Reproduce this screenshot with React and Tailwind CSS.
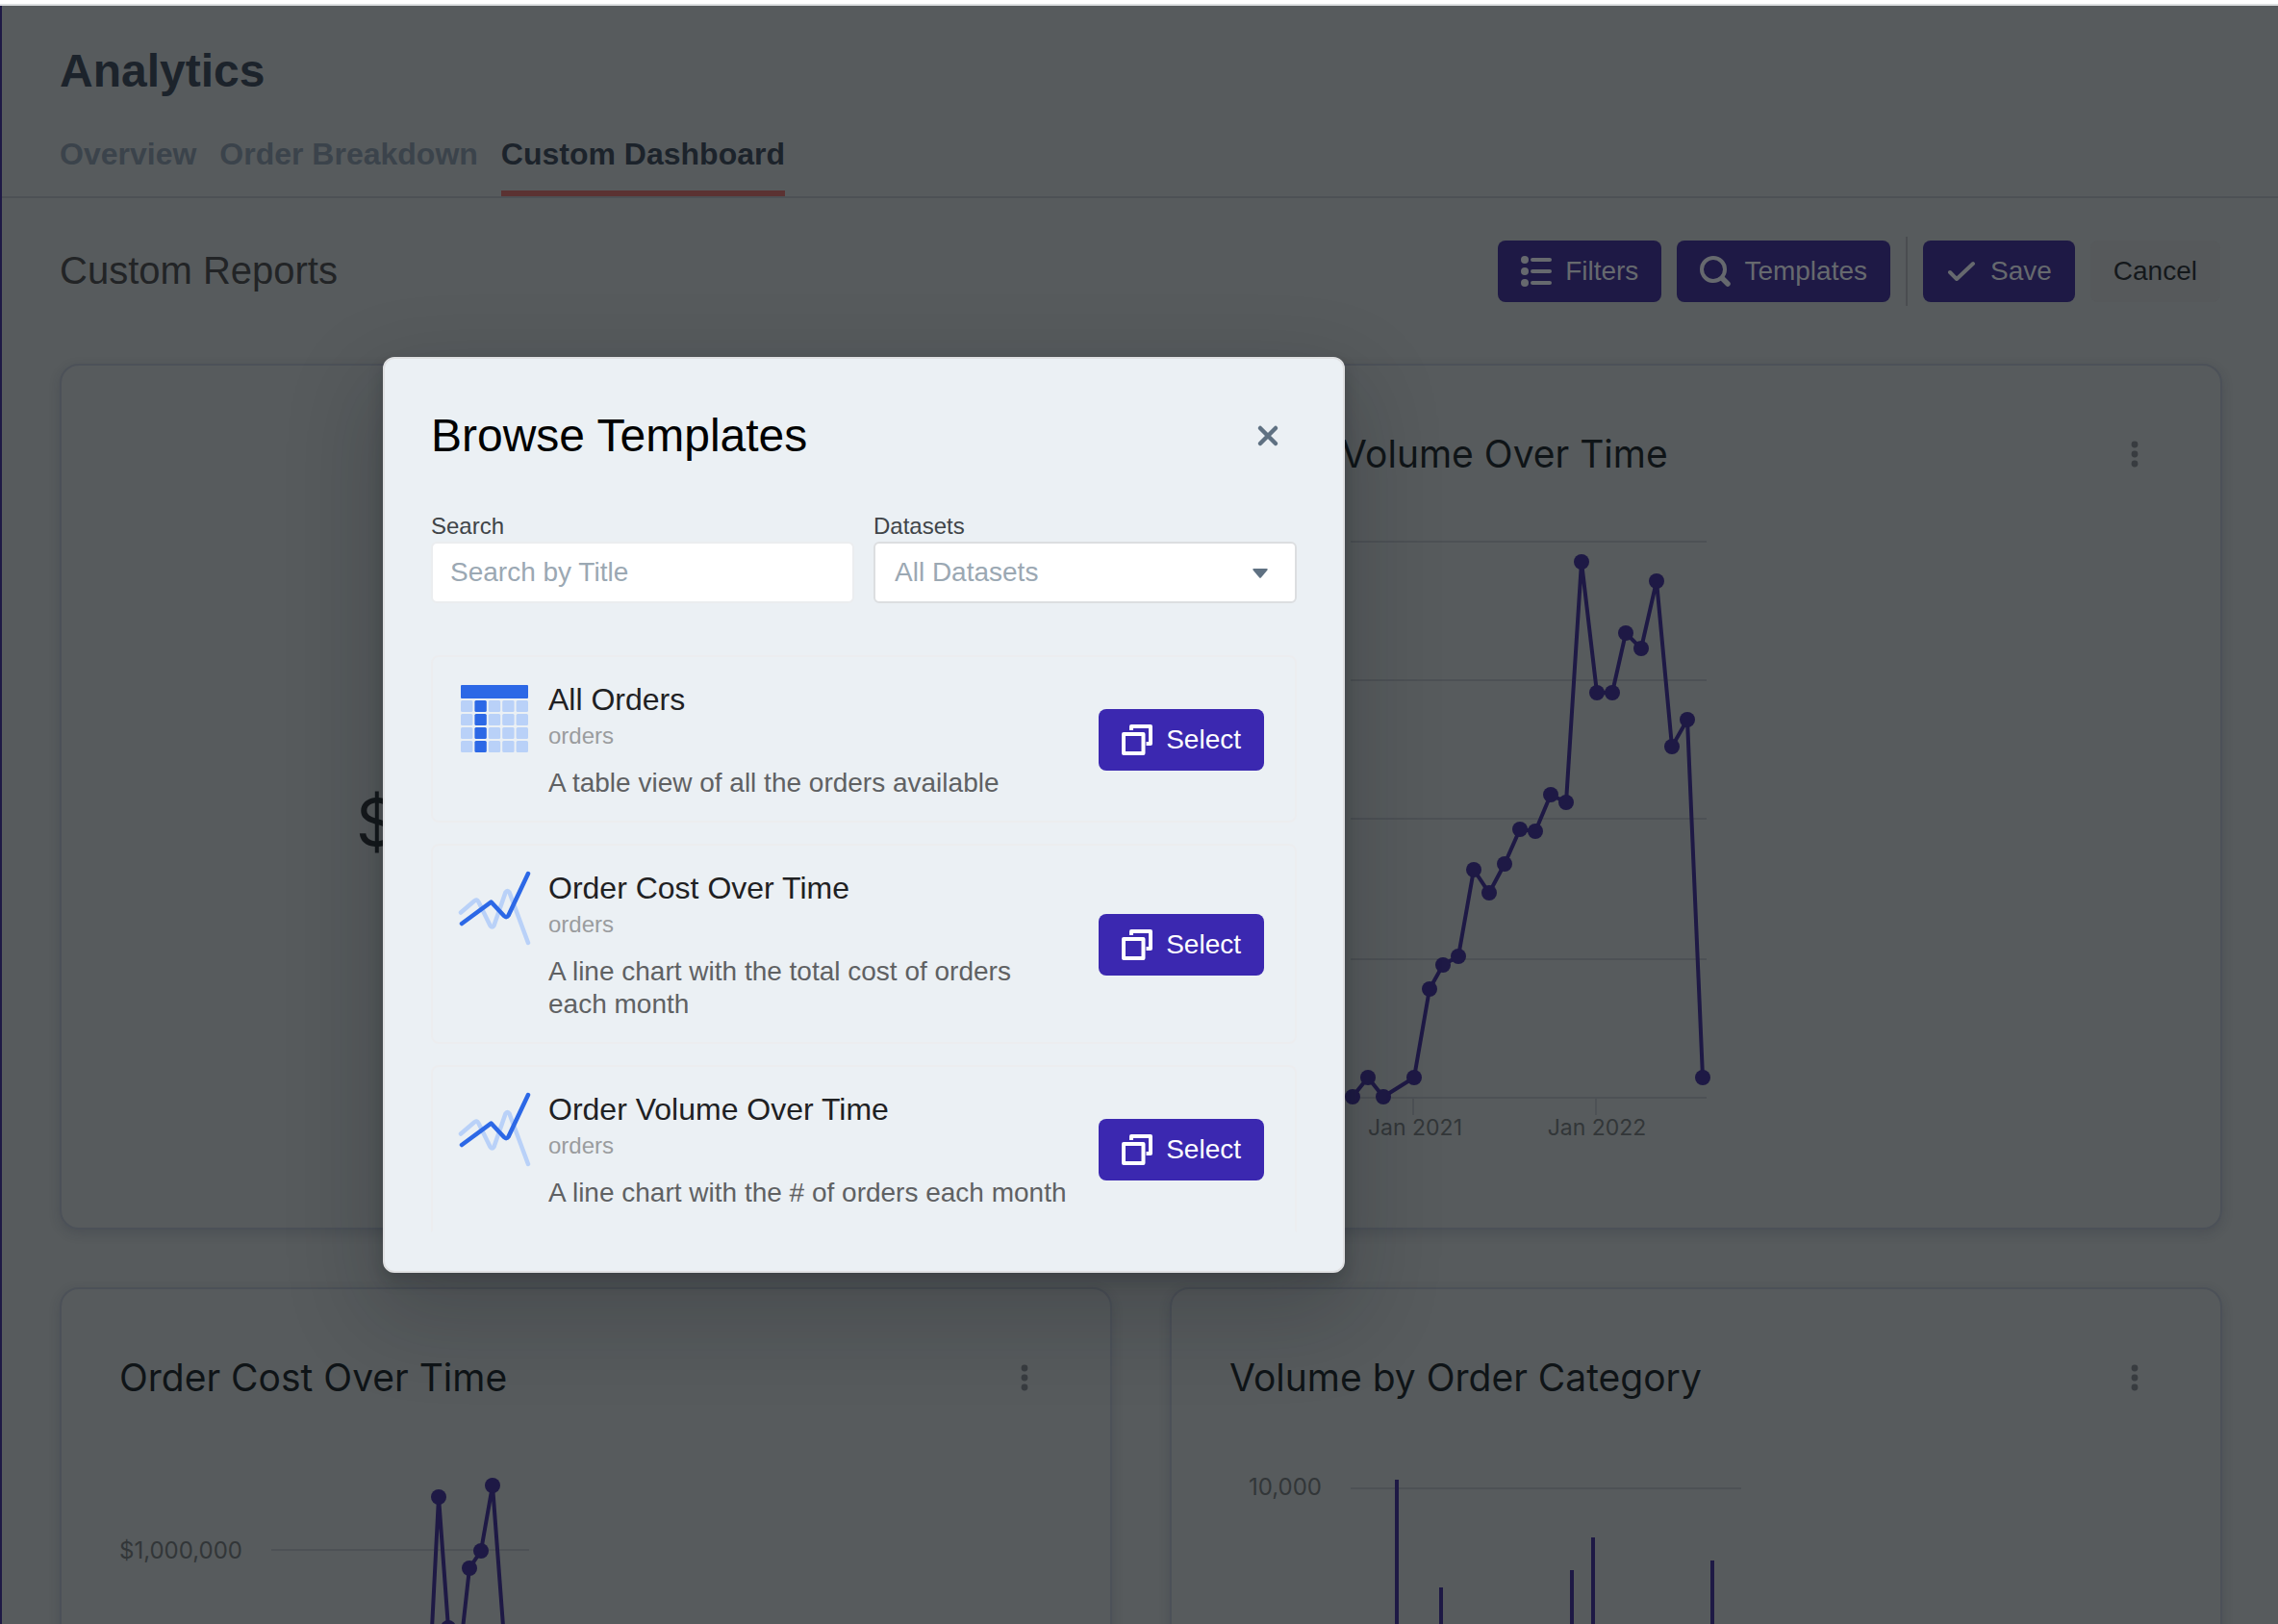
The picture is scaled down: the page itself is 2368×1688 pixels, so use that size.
import React, { useState } from 'react';
import clsx from 'clsx';

const TABS = ['Overview', 'Order Breakdown', 'Custom Dashboard'];

const TEMPLATES = [
  { id: 1, title: 'All Orders', dataset: 'orders', type: 'table', description: 'A table view of all the orders available' },
  { id: 2, title: 'Order Cost Over Time', dataset: 'orders', type: 'line', description: 'A line chart with the total cost of orders each month' },
  { id: 3, title: 'Order Volume Over Time', dataset: 'orders', type: 'line', description: 'A line chart with the # of orders each month' },
];

const VOLUME_POINTS = [
  [128, 600], [144, 580], [160, 600], [192, 580], [208, 488], [222, 463], [238, 454], [254, 364],
  [270, 388], [286, 358], [302, 322], [318, 324], [334, 286], [350, 294], [366, 44], [382, 180],
  [398, 180], [412, 118], [428, 134], [444, 64], [460, 236], [476, 208], [492, 580],
];

const COST_POINTS = [[318, 330], [332, 56], [342, 192], [354, 220], [364, 130], [376, 112], [388, 44], [402, 230]];

const CATEGORY_BARS = [[172, 38], [218, 150], [354, 132], [376, 98], [500, 122]];

function ListIcon() {
  return (
    <svg className="w-8 h-8" viewBox="0 0 32 32" fill="currentColor">
      {[4, 16, 28].map((y) => (
        <g key={y}>
          <circle cx="4" cy={y} r="4" />
          <rect x="10" y={y - 2} width="22" height="4" rx="2" />
        </g>
      ))}
    </svg>
  );
}

function SearchIcon() {
  return (
    <svg className="w-8 h-8" viewBox="0 0 32 32" fill="none" stroke="currentColor" strokeLinecap="round">
      <circle cx="14" cy="14" r="12" strokeWidth="4" />
      <path d="M23.5 23.5l5.5 5.5" strokeWidth="5.5" />
    </svg>
  );
}

function TickIcon() {
  return (
    <svg className="w-8 h-8" viewBox="0 0 32 32" fill="none" stroke="currentColor" strokeWidth="4" strokeLinecap="round" strokeLinejoin="round">
      <path d="M4 17l7 7L28 8" />
    </svg>
  );
}

function DuplicateIcon() {
  return (
    <svg className="w-8 h-8" viewBox="0 0 32 32" fill="none" stroke="currentColor" strokeWidth="4" strokeLinejoin="round">
      <rect x="2" y="10" width="20.5" height="20" />
      <path d="M10 6V2h20v18h-4.5" />
    </svg>
  );
}

function TableArt() {
  return (
    <svg className="w-20 h-20 shrink-0" viewBox="0 0 80 80">
      <rect x="5" y="5" width="70" height="14" rx="1" fill="#2c68e6" />
      {[21, 35, 49, 63].map((y) =>
        [0, 1, 2, 3, 4].map((c) => (
          <rect key={`${y}-${c}`} x={5 + c * 14.4} y={y} width="12.4" height="12" rx="1.5" fill={c === 1 ? '#2c68e6' : '#b9d1f8'} />
        ))
      )}
    </svg>
  );
}

function LineArt() {
  return (
    <svg className="w-20 h-20 shrink-0" viewBox="0 0 80 80" fill="none" strokeWidth="4.5" strokeLinecap="round" strokeLinejoin="round">
      <path d="M5 45.5L19 33.5Q21.500 31 23.500 34.500L35.500 59Q37.500 62 39.500 59L51.500 24.500Q53.500 21.500 55.500 24.500L75 77" stroke="#b9d1f8" />
      <path d="M6 57L36.500 34.500L50 49Q52.500 51.500 54.500 48.500L75 5" stroke="#2c68e6" />
    </svg>
  );
}

function HeaderButton({ icon, children }) {
  return (
    <button type="button" className="flex items-center gap-3.5 h-16 px-6 rounded-lg bg-[#1e1945] text-[#66696e] text-[28px]">
      {icon}
      {children}
    </button>
  );
}

function Card({ title, children }) {
  return (
    <section className="min-w-0 h-[900px] px-15 pt-[68px] rounded-[20px] border-2 border-[#4c5158] shadow-[0_4px_12px_rgba(30,34,50,0.18)]">
      {title && (
        <div className="flex items-center justify-between mb-11">
          <h3 className="font-[Inter,sans-serif] text-[39px] leading-[48px] text-[#0f1417]">{title}</h3>
          <button type="button" aria-label={`${title} options`} className="flex justify-center w-[58px] text-[#383c40]">
            <svg className="w-8 h-8" viewBox="0 0 32 32" fill="currentColor">
              <circle cx="16" cy="6" r="3.4" />
              <circle cx="16" cy="16" r="3.4" />
              <circle cx="16" cy="26" r="3.4" />
            </svg>
          </button>
        </div>
      )}
      {children}
    </section>
  );
}

function Chart({ children }) {
  return (
    <svg className="font-[Inter,sans-serif]" width="560" height="670" viewBox="0 0 560 670" fontSize="24">
      {children}
    </svg>
  );
}

function LineSeries({ points }) {
  return (
    <g fill="#1e1945">
      <polyline points={points.map((p) => p.join(',')).join(' ')} fill="none" stroke="#1e1945" strokeWidth="4" />
      {points.map(([x, y]) => (
        <circle key={x} cx={x} cy={y} r="8" />
      ))}
    </g>
  );
}

function VolumeChart() {
  return (
    <Chart>
      <g stroke="#4d5155" strokeWidth="2">
        {[23, 167, 311, 457, 601].map((y) => (
          <line key={y} x1="126" x2="496" y1={y} y2={y} />
        ))}
        <path d="M191 601v18M381 601v18" />
      </g>
      <LineSeries points={VOLUME_POINTS} />
      <g fill="#323638" textAnchor="middle" fontSize="23">
        <text x="193" y="640">Jan 2021</text>
        <text x="382" y="640">Jan 2022</text>
      </g>
    </Chart>
  );
}

function CostChart() {
  return (
    <Chart>
      <line x1="158" x2="426" y1="111" y2="111" stroke="#4d5155" strokeWidth="2" />
      <text x="128" y="120" textAnchor="end" fill="#323638">$1,000,000</text>
      <LineSeries points={COST_POINTS} />
    </Chart>
  );
}

function CategoryChart() {
  return (
    <Chart>
      <line x1="126" x2="532" y1="47" y2="47" stroke="#4d5155" strokeWidth="2" />
      <text x="96" y="54" textAnchor="end" fill="#323638">10,000</text>
      {CATEGORY_BARS.map(([x, y]) => (
        <rect key={x} x={x} y={y} width="4" height={620 - y} fill="#1e1945" />
      ))}
    </Chart>
  );
}

function TemplatesDialog() {
  const [search, setSearch] = useState('');
  const [dataset, setDataset] = useState('');

  const visible = TEMPLATES.filter(
    (t) => t.title.toLowerCase().includes(search.toLowerCase()) && (!dataset || t.dataset === dataset)
  );

  return (
    <div
      role="dialog"
      aria-labelledby="templates-title"
      className="absolute left-[398px] top-[371px] w-[1000px] px-12 pt-[50px] pb-10 rounded-xl border-2 border-[#dfe0e2] bg-[#ebf0f4] shadow-[0_8px_16px_rgba(17,20,24,0.2),0_36px_92px_12px_rgba(17,20,24,0.2)]"
    >
      <div className="flex items-center justify-between mb-12">
        <h2 id="templates-title" className="text-[48px] leading-[60px] text-black">Browse Templates</h2>
        <button type="button" aria-label="Close" className="flex items-center justify-center w-15 h-15 text-[#5f7182]">
          <svg className="w-8 h-8" viewBox="0 0 32 32" fill="none" stroke="currentColor" strokeWidth="4.500" strokeLinecap="round">
            <path d="M8 8l16 16M24 8L8 24" />
          </svg>
        </button>
      </div>

      <div className="grid grid-cols-2 gap-5 mb-[54px]">
        <div>
          <label htmlFor="template-search" className="block text-2xl leading-8 text-[#404448]">Search</label>
          <input
            id="template-search"
            type="text"
            value={search}
            onChange={(e) => setSearch(e.target.value)}
            placeholder="Search by Title"
            className="block w-full h-16 pl-[18px] pr-4 rounded-md border-2 border-[#ebedef] bg-white bg-clip-padding text-[28px] placeholder:text-[#9ba8b3] outline-none"
          />
        </div>
        <div>
          <label htmlFor="template-dataset" className="block text-2xl leading-8 text-[#404448]">Datasets</label>
          <div className="relative">
            <select
              id="template-dataset"
              value={dataset}
              onChange={(e) => setDataset(e.target.value)}
              className="block appearance-none w-full h-16 pl-5 pr-16 rounded-md border-2 border-[#dcdee0] bg-white text-[28px] text-[#9ba8b3] outline-none"
            >
              <option value="">All Datasets</option>
              <option value="orders">orders</option>
            </select>
            <svg className="absolute right-[30px] top-7 w-4 h-2.5 pointer-events-none" viewBox="0 0 16 10" fill="#5f7182">
              <path d="M1.500 0h13q2 0 .8 1.800L9 9.200q-1 1-2 0L.7 1.800Q-.5 0 1.500 0z" />
            </svg>
          </div>
        </div>
      </div>

      <ul className="flex flex-col gap-[22px]">
        {visible.map((t, i) => (
          <li
            key={t.id}
            className={clsx(
              'flex items-center justify-between gap-6 pl-6 pr-8 pt-6 pb-[22px] border-2 border-[#ecedef]',
              i === visible.length - 1 ? 'rounded-t-lg border-b-transparent' : 'rounded-lg'
            )}
          >
            <div className="flex items-start gap-4 min-w-0">
              {t.type === 'table' ? <TableArt /> : <LineArt />}
              <div>
                <h4 className="text-[32px] leading-10 text-[#1f2123]">{t.title}</h4>
                <p className="mt-1 text-2xl leading-7 text-[#9a9c9e]">{t.dataset}</p>
                <p className="mt-[18px] text-[28px] leading-[34px] text-[#5f6163]">{t.description}</p>
              </div>
            </div>
            <button type="button" className="flex items-center gap-3.5 shrink-0 h-16 px-6 rounded-lg bg-[#3b28b0] text-white text-[28px]">
              <DuplicateIcon />
              Select
            </button>
          </li>
        ))}
      </ul>
    </div>
  );
}

export default function App() {
  const [tab, setTab] = useState('Custom Dashboard');

  return (
    <div className="relative h-screen overflow-hidden bg-white font-['Liberation_Sans',Arial,sans-serif]">
      <div className="mt-1 border-t-2 border-[#dcdfe0]">
        <div className="min-h-screen border-l-2 border-[#1e1945] bg-[#575b5d]">
          <header className="px-15 pt-10 border-b-2 border-[#4d5155]">
            <h1 className="text-[48px] leading-14 font-bold text-[#1c232b]">Analytics</h1>
            <nav className="flex gap-6 mt-[38px]">
              {TABS.map((name) => (
                <button
                  key={name}
                  type="button"
                  onClick={() => setTab(name)}
                  className={clsx(
                    'pb-[18px] border-b-6 text-[32px] leading-10 font-bold',
                    tab === name ? 'border-[#5b3232] text-[#1c232b]' : 'border-transparent text-[#3b434b]'
                  )}
                >
                  {name}
                </button>
              ))}
            </nav>
          </header>

          <main className="pl-15 pr-[58px] pt-10">
            <div className="flex items-center justify-between h-18 pr-0.5 mb-15">
              <h2 className="pb-0.5 text-[40px] text-[#222426]">Custom Reports</h2>
              <div className="flex items-center gap-4">
                <HeaderButton icon={<ListIcon />}>Filters</HeaderButton>
                <HeaderButton icon={<SearchIcon />}>Templates</HeaderButton>
                <div className="w-0.5 h-18 bg-[#4a4d50]" />
                <HeaderButton icon={<TickIcon />}>Save</HeaderButton>
                <button type="button" className="h-16 px-6 rounded-lg bg-[#56595b] text-[28px] text-[#14181b]">Cancel</button>
              </div>
            </div>

            <div className="grid grid-cols-2 gap-15">
              <Card>
                <p className="pt-[372px] pl-[246px] leading-none font-[Inter,sans-serif] text-[68px] text-[#14181b]">$</p>
              </Card>
              <Card title="Order Volume Over Time">
                <VolumeChart />
              </Card>
              <Card title="Order Cost Over Time">
                <CostChart />
              </Card>
              <Card title="Volume by Order Category">
                <CategoryChart />
              </Card>
            </div>
          </main>
        </div>
      </div>

      <TemplatesDialog />
    </div>
  );
}
